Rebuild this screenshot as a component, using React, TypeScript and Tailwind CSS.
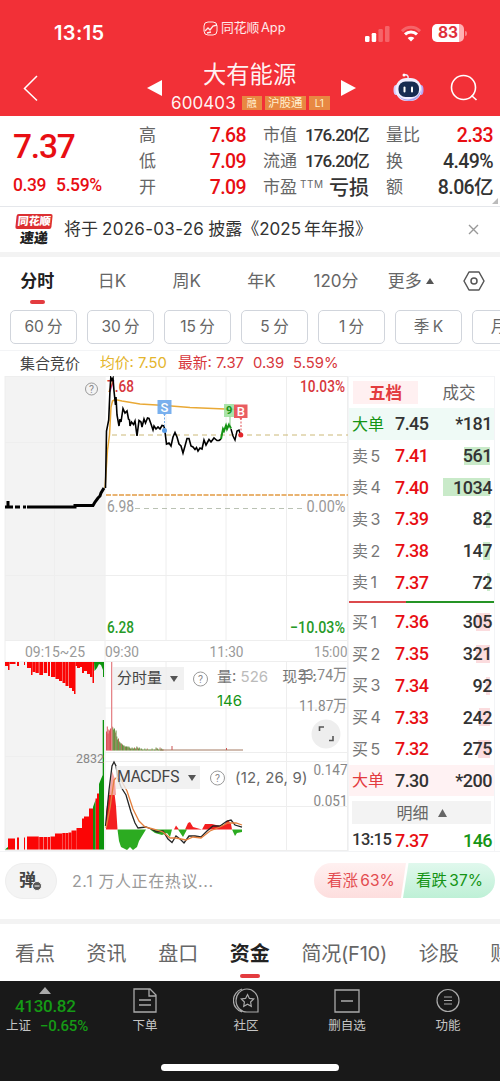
import React from 'react';
import clsx from 'clsx';

interface Level {
  label: string;
  price: string;
  volume: string;
  bar: number;
}

const asks: Level[] = [
  { label: '卖 5', price: '7.41', volume: '561', bar: 26 },
  { label: '卖 4', price: '7.40', volume: '1034', bar: 47 },
  { label: '卖 3', price: '7.39', volume: '82', bar: 4 },
  { label: '卖 2', price: '7.38', volume: '147', bar: 7 },
  { label: '卖 1', price: '7.37', volume: '72', bar: 3 },
];

const bids: Level[] = [
  { label: '买 1', price: '7.36', volume: '305', bar: 14 },
  { label: '买 2', price: '7.35', volume: '321', bar: 14 },
  { label: '买 3', price: '7.34', volume: '92', bar: 4 },
  { label: '买 4', price: '7.33', volume: '242', bar: 11 },
  { label: '买 5', price: '7.32', volume: '275', bar: 12 },
];

const periods = ['60 分', '30 分', '15 分', '5 分', '1 分', '季 K', '月 K'];
const bottomTabs = ['看点', '资讯', '盘口', '资金', '简况(F10)', '诊股', '财务'];

const num = "font-['Roboto','Noto_Sans_CJK_SC',sans-serif]";

function StatusBar() {
  return (
    <div className="flex h-[62px] items-start">
      <div className="w-[203px] pl-[54px] pt-[21px] text-[20px] leading-[25px] font-semibold tracking-[0.400px]">13:15</div>
      <div className="flex w-[162px] items-center gap-[3px] pt-[19px] text-[13px] leading-[18px] text-white/90">
        <svg width="15" height="15" viewBox="0 0 15 15" fill="none" stroke="currentColor">
          <rect x="1" y="1" width="13" height="13" rx="4" />
          <path d="M2 10l3-3 2 2 3-4 4-1M4 12l4-1" strokeWidth="1.3" />
        </svg>
        <span className="text-[12.800px] whitespace-nowrap [word-spacing:-2px]">同花顺 App</span>
      </div>
      <div className="flex items-center gap-[11px] pt-[24px]">
        <svg width="25" height="17" viewBox="0 0 25 17" fill="#fff">
          <rect x="0" y="11" width="4.5" height="6" rx="1.3" />
          <rect x="6.7" y="8" width="4.5" height="9" rx="1.3" />
          <rect x="13.4" y="4" width="4.5" height="13" rx="1.3" opacity=".25" />
          <rect x="20" y="1" width="4.5" height="16" rx="1.3" opacity=".25" />
        </svg>
        <svg width="20" height="17" viewBox="0 0 20 17" fill="none" stroke="#fff" strokeWidth="3">
          <path d="M1 6.2C6 1 14 1 19 6.2" opacity=".25" />
          <path d="M4 9.4c3.4-3.3 8.600-3.300 12 0" />
          <path d="M10 16.500l-3.400-3.500c2-1.800 4.800-1.800 6.800 0z" fill="#fff" stroke="none" />
        </svg>
        <div className="flex items-center gap-[1px]">
          <div className="flex h-[18px] w-[32px] items-center justify-center rounded-[5px] bg-linear-to-r from-white from-84% to-[#ffb0b3] to-84% text-[15.500px] font-bold text-[#e0303c]">83</div>
          <div className="h-[5px] w-[2px] rounded-r bg-white/40" />
        </div>
      </div>
    </div>
  );
}

function TitleBar() {
  return (
    <div className="flex h-[54px]">
      <div className="w-[140px] pl-[22px] pt-[12px]">
        <svg width="17" height="28" viewBox="0 0 17 28" fill="none" stroke="#fff" strokeWidth="1.5">
          <path d="M15 2L2.500 14.500L15 26.500" />
        </svg>
      </div>
      <div className="w-[31px] pl-[7px] pt-[18px]">
        <svg width="15" height="16" fill="#fff"><path d="M0 8L15 0V16z" /></svg>
      </div>
      <div className="w-[162px]">
        <div className="-mt-px pl-[32px] text-[23.300px] leading-[27px] text-white/95">大有能源</div>
        <div className="mt-px flex items-center gap-[3px] text-[10px] text-[#fff0d0]">
          <span className="mr-[3px] text-[17px] leading-[28px] tracking-[0.100px] text-white/95">600403</span>
          <span className="h-[14px] w-[20px] bg-[#e88842] text-center leading-[14px]">融</span>
          <span className="h-[14px] w-[41px] bg-[#e88842] text-center text-[11.500px] leading-[14px]">沪股通</span>
          <span className="h-[14px] w-[21px] bg-[#e88842] text-center leading-[14px]">L1</span>
        </div>
      </div>
      <div className="w-[60px] pl-[8px] pt-[18px]">
        <svg width="15" height="16" fill="#fff"><path d="M15 8L0 0V16z" /></svg>
      </div>
      <div className="w-[57px] pt-[10px]">
        <svg width="31" height="30" viewBox="0 0 31 30">
          <path d="M11 3q5-1 4 4" fill="none" stroke="#eee5ff" strokeWidth="1.500" />
          <circle cx="11" cy="3" r="1.500" fill="#fff" />
          <ellipse cx="3" cy="18" rx="2.500" ry="5" fill="#d6cafa" />
          <ellipse cx="28" cy="18" rx="2.500" ry="5" fill="#b8a4f2" />
          <rect x="2.500" y="6" width="26" height="23" rx="11" fill="#f1eeff" />
          <path d="M4 21c3 8 19 10 24-3-1 14-20 14-24 3z" fill="#a9a3ef" />
          <rect x="5.500" y="9.500" width="20.500" height="15.500" rx="7" fill="#172b51" />
          <rect x="10.500" y="14.500" width="2" height="6" rx="1" fill="#fff" />
          <rect x="18" y="14.500" width="2" height="6" rx="1" fill="#fff" />
        </svg>
      </div>
      <div className="pt-[12px]">
        <svg width="28" height="28" viewBox="0 0 28 28" fill="none" stroke="#fff" strokeWidth="1.600">
          <circle cx="13.500" cy="13.500" r="12" />
          <path d="M21.500 21.500l5 4.500" />
        </svg>
      </div>
    </div>
  );
}

function Quote() {
  return (
    <section className="relative flex h-[91px] border-b border-gray-200 pt-[7px] text-[17px] text-[#333]">
      <div className={clsx('w-[139px] pl-[13px] font-medium text-[#e80e13]', num)}>
        <div className="h-[49px] pt-[4px] text-[33.500px] leading-[40px] font-medium tracking-[-1.200px]">7.37</div>
        <div className="flex h-[26px] items-center gap-[10px] text-[17.500px] tracking-[-0.400px]"><span>0.39</span><span>5.59%</span></div>
      </div>
      <div className="w-[107px]">
        {[['高', '7.68'], ['低', '7.09'], ['开', '7.09']].map(([k, v]) => (
          <div key={k} className="flex h-[26px] items-center justify-between">
            <span className="text-[#666]">{k}</span>
            <span className={clsx('text-[19.500px] font-medium tracking-[-0.600px] text-[#e80e13]', num)}>{v}</span>
          </div>
        ))}
      </div>
      <div className="ml-[17px] w-[106px]">
        {[['市值', '176.20亿'], ['流通', '176.20亿']].map(([k, v]) => (
          <div key={k} className="flex h-[26px] items-center justify-between whitespace-nowrap">
            <span className="text-[#666]">{k}</span>
            <span className={clsx('text-[17px] font-medium tracking-[-0.850px]', num)}>{v}</span>
          </div>
        ))}
        <div className="flex h-[26px] items-center justify-between whitespace-nowrap">
          <span className="text-[#666]">市盈<sup className="ml-[3px] text-[10px] tracking-[0.500px]">TTM</sup></span>
          <span className="text-[20px] font-medium">亏损</span>
        </div>
      </div>
      <div className="ml-[17px] w-[107px]">
        {[['量比', '2.33'], ['换', '4.49%'], ['额', '8.06亿']].map(([k, v]) => (
          <div key={k} className="flex h-[26px] items-center justify-between">
            <span className="text-[#666]">{k}</span>
            <span className={clsx('text-[19.500px] font-medium tracking-[-0.600px]', num, k === '量比' && 'text-[#e80e13]')}>{v}</span>
          </div>
        ))}
      </div>
      <svg className="absolute right-[2px] bottom-[2px]" width="6" height="6" fill="#bbb"><path d="M6 0V6H0z" /></svg>
    </section>
  );
}

function News() {
  return (
    <section className="flex h-[45px] items-center pl-[16px]">
      <div className="flex w-[48px] flex-col items-start">
        <span className="h-[15px] w-[36px] -skew-x-6 rounded-[2px] bg-[#dc2f31] text-center text-[11px] leading-[15px] font-black text-white">同花顺</span>
        <span className="ml-[4px] h-[17px] -skew-x-6 text-[14px] leading-[17px] font-black text-[#222]">速递</span>
      </div>
      <div className="flex-1 text-[17px] whitespace-nowrap text-[#333]">将于<span className="mx-[4px] tracking-[0.300px]">2026-03-26</span>披露《2025<span className="ml-[3px]">年年报》</span></div>
      <svg className="mr-[21px]" width="11" height="11" stroke="#999" strokeWidth="1.400"><path d="M1 1l9 9M10 1l-9 9" /></svg>
    </section>
  );
}

function PeriodTabs() {
  return (
    <>
      <nav className="flex h-[53px] pt-[11px] text-[17px] text-[#666]">
        {['分时', '日K', '周K', '年K', '120分', '更多'].map((t, i) => (
          <div key={t} className={clsx('flex w-[74.700px] flex-col items-center', i === 0 && 'font-bold text-[#222]')}>
            <span className="flex items-center gap-[4px] leading-[26px]">
              {t}
              {t === '更多' && <svg width="8" height="6" fill="#555"><path d="M4 0L8 6H0z" /></svg>}
            </span>
            {i === 0 && <span className="mt-[6px] h-[4px] w-[15px] rounded-full bg-[#e33b3f]" />}
          </div>
        ))}
        <svg className="mt-[3px] ml-[15px]" width="22" height="20" viewBox="0 0 22 20" fill="none" stroke="#555" strokeWidth="1.500">
          <path d="M6 1h10l5 9-5 9H6L1 10z" strokeLinejoin="round" />
          <circle cx="11" cy="10" r="3" />
        </svg>
      </nav>
      <div className="flex h-[41px] gap-[10px] overflow-hidden border-b border-gray-100 pl-[10px] text-[15.500px] text-[#666] [word-spacing:-1px]">
        {periods.map((p) => (
          <div key={p} className="flex h-[34px] w-[67px] shrink-0 items-center justify-center rounded-[5px] border border-gray-300">{p}</div>
        ))}
      </div>
    </>
  );
}

const gray = '#f3f3f3';
const grid = '#eeeeee';

const priceLine =
  'M105.500 488L106.500 431L108.700 420L110 390L110.800 377.500L112 380L113 378L114 391L115.500 405L116 397L117 415L119 426L120 419L121 422L123 408.500L125 413L127 411L128.500 419L129.500 420L130 426L131.500 422L133.500 424.500L135 421L137 436L139 420.500L141 422L142 427L144 419L145.500 423L147.500 418L149 418.500L151 424L153 430L154 426L156 429L158 427L160 429L162 425.500L164 426L165 432L166.500 444L169 443L171 446L173 437L175 432.500L177 437L179 444L181 446L183 453L185 446L187 438.500L189 438.500L191 446L193 447L195 449.500L196.500 447.500L198 451L200 448L202 449L204 440L206 445L209 439.500L211 442L214 438L217 440.500L219 440.500L221 439';

// call auction volumes: [x, width, bar height]
const auctionTop = [
  [5, 3, 4], [8, 1.5, 8], [9.5, 6, 2], [17, 2, 4], [24, 1, 3], [27, 4, 6], [31, 1.5, 13], [32.5, 3, 10],
  [35.5, 3.3, 11], [39.3, 3.7, 13], [43.7, 3.5, 11], [48, 2, 14], [51, 4.5, 15], [55.5, 3.5, 17], [59, 3.2, 19],
  [62.5, 3, 21], [65.5, 3, 24], [69, 3, 26], [72, 2, 29], [74, 1.5, 32], [75.5, 1.5, 4],
  [77, 3, 6], [80, 2, 5], [82, 2, 11], [84, 3, 9], [87, 3, 12], [90, 2.5, 15], [92.5, 1.5, 21],
];
const auctionBottom = [
  [8, 7, 11], [17, 2, 12], [24, 1, 12], [27, 11.8, 13], [39.2, 4.2, 12.5], [43.8, 3.7, 12.5], [48, 2, 12.5],
  [50.5, 4.5, 13], [55, 7, 16], [62.3, 2.7, 16.5], [65.3, 3, 16.5], [68.5, 3, 17], [71.5, 5, 19],
  [76.5, 5.5, 21.5], [82, 2, 31], [84, 5, 33], [89, 4, 41], [95.5, 1.5, 51], [97, 2, 56],
];
const volumes = [
  19, 24, 17, 21, 20, 22, 19, 24, 23, 21, 22, 18, 20, 14, 11, 12, 9, 8, 7, 7, 6, 5, 5, 4, 4, 4, 4, 3, 4, 3, 2, 2, 3, 2,
  2, 3, 2, 2, 4, 3, 2, 3, 2, 1, 2, 1, 1, 1, 2, 1, 1, 2, 1, 1, 1, 1, 1, 2, 1, 1, 1, 1, 3, 2, 2, 1, 1, 3, 1, 2, 1, 1,
];

function Charts() {
  return (
    <div className="relative h-[476px] w-[348px] shrink-0">
      <svg width="348" height="476" viewBox="0 376 348 476" className={num} fontWeight="500" fontSize="16.500">
        <path d="M5 376.500H104.700V640.500H5zM5 661H104.700V850.500H5z" fill={gray} />
        <path d="M5 376.500H348M5 442.500H348M5 575.500H348M5 640.500H348M5 376V850M54.500 376V640M54.500 661V850M105 376V850M166 376V640M166 661V850M226 376V640M226 661V850M286.500 376V640M286.500 661V850M347.500 376V850M105 661.500H348M105 708H348M5 756.500H104M105 752.500H348M105 761.500H348M105 806.500H348M5 850.500H348" stroke={grid} fill="none" />
        <path d="M112 435H348" stroke="#ccb978" strokeDasharray="5 4" strokeWidth="1" />
        <path d="M106 495H348" stroke="#e29a43" strokeDasharray="5 1.500" strokeWidth="1.600" />
        <path d="M135 508.500H306" stroke="#bac2b4" strokeDasharray="5 4" />

        <g fill="#d7373c">
          <text x="107" y="391.500" textLength="27" lengthAdjust="spacingAndGlyphs">7.68</text>
          <text x="300" y="391.500" textLength="45" lengthAdjust="spacingAndGlyphs">10.03%</text>
        </g>
        <g fill="#279a27">
          <text x="107" y="632.500" textLength="27" lengthAdjust="spacingAndGlyphs">6.28</text>
          <text x="290" y="632.500" textLength="55" lengthAdjust="spacingAndGlyphs">−10.03%</text>
        </g>
        <g fill="#999" fontWeight="400">
          <text x="107" y="512" textLength="27" lengthAdjust="spacingAndGlyphs">6.98</text>
          <text x="306.500" y="512" textLength="39" lengthAdjust="spacingAndGlyphs">0.00%</text>
          <text x="25" y="657" fontSize="15.500" textLength="60" lengthAdjust="spacingAndGlyphs">09:15~25</text>
          <text x="105" y="656.500" fontSize="15.500" textLength="34" lengthAdjust="spacingAndGlyphs">09:30</text>
          <text x="209.500" y="656.500" fontSize="15.500" textLength="34" lengthAdjust="spacingAndGlyphs">11:30</text>
          <text x="314" y="656.500" fontSize="15.500" textLength="33.500" lengthAdjust="spacingAndGlyphs">15:00</text>
        </g>

        <path d="M5 507H13M8 501V508M15 507H20M23 507H26M27 507H75V505.500H93L95 502L98 498L100 496L101 493L104 488" fill="none" stroke="#000" strokeWidth="3" />
        <path d="M105 488L107.500 450L109.500 435L111 407L112.500 401L115 399.500L122 401L140 404L165 405.500L190 407.500L225 409L238 409.500" fill="none" stroke="#e9a936" strokeWidth="1.500" />
        <path d={priceLine} fill="none" stroke="#000" strokeWidth="1.600" />
        <path d="M231 429L233 436L235 440L237 431L239 430L240.500 435" fill="none" stroke="#000" strokeWidth="1.500" />
        <path d="M221 439L223 429L224 431L226 425.500L227 429L229 424.500L231 428.500" fill="none" stroke="#159415" strokeWidth="2" />
        <path d="M164.500 414V430" stroke="#75aeea" strokeDasharray="2 1.500" />
        <circle cx="164.500" cy="430.500" r="2.500" fill="#5b9ee8" />
        <path d="M157.500 400h14v14h-5.500l-1.500 2-1.500-2h-5.500z" fill="#6aa7ec" opacity=".9" />
        <path d="M230 416V425" stroke="#83c883" />
        <path d="M224 404h10v13H224z" fill="#9adf9a" opacity=".85" />
        <text x="226" y="414" fontSize="11" fontWeight="700" fill="#169316">9</text>
        <path d="M241 418V433" stroke="#e05357" strokeDasharray="2 1.500" />
        <circle cx="240.800" cy="435" r="2.500" fill="#e3262b" />
        <path d="M234 404.500h13.500v13.500h-5.200l-1.500 2-1.500-2H234z" fill="#e85459" opacity=".95" />
        <text x="164.500" y="412" fontSize="13" fill="#fff" textAnchor="middle">S</text>
        <text x="240.800" y="416" fontSize="13" fill="#fff" textAnchor="middle">B</text>

        {/* call auction */}
        <g fill="#fb0505">
          {auctionTop.map(([x, w, h]) => <rect key={x} x={x} y="662" width={w} height={h} />)}
          {auctionBottom.map(([x, w, h]) => <rect key={x} x={x} y={849.5 - h} width={w} height={h} />)}
        </g>
        <path d="M94 662H104V677H103V670L101 665L99 664L97 668L94.500 671zM5 849.500L8 847V849.500zM93 849.500V807L95.500 800V849.500zM99 849.500V784L101 779L102.700 775V720H104V849.500z" fill="#0d940d" />

        {/* volume */}
        {volumes.map((v, i) => (
          <rect key={i} x={106 + i * 0.8} y={750.5 - v} width="0.900" height={v} fill={i < 8 ? '#db4149' : i % 4 === 3 ? '#a8624a' : '#55882e'} />
        ))}
        <rect x="111" y="662" width="1.300" height="88" fill="#e58589" />
        <path d="M160 750H243" stroke="#a47b62" />
        <path d="M172 750V746M226.500 750V748" stroke="#cb5252" />

        {/* macd */}
        <path d="M106 829.500V812L108 800L110 789L112 785L114 789L116 806L117.500 829.500zM174 829.500L176 825.500L179 829.500zM185 829.500L188 823L190 822L193 827L202 829.500L205 824L212 824L220 826L224 825L228 820L231 824L232 829.500z" fill="#f41f20" />
        <path d="M109 795L111 780L112 771L115 779L116 795z" fill="#f5a5a5" />
        <path d="M117.500 829.500H146L142 836L139 841L137 847L133 850L130 847L127 850L121 847L119 841zM150 829.500H172L170 837L167 833L162 835L155 833zM178 829.500H187L183 837zM232 829.500H242V832L237 833L235 836z" fill="#2cab21" />
        <path d="M105.500 826L109 790L112 766L114 762L116 766L118 779L121 787L126 795L131 812L135 823L138 828L146 827L151 829L157 832L163 831L168 839L172 842.500L176 836L180 839L184 843L189 836L195 836L201 837L207 831L213 826L220 826L227 821L231 820L235 825L242 827" fill="none" stroke="#252525" strokeWidth="1.300" />
        <path d="M106 828L110 808L114 780L117 777L121 780L127 791L133 809L139 821L145 827L153 829L163 832L170 838L176 838L186 840L193 837L201 838L210 831L220 827L228 823L236 823L242 825" fill="none" stroke="#e4803e" strokeWidth="1.300" />

        <g fill="#888" fontWeight="400" fontSize="15.500">
          <text x="76" y="763" fontSize="13" textLength="28" lengthAdjust="spacingAndGlyphs">2832</text>
          <text x="298" y="679.500" textLength="49" lengthAdjust="spacingAndGlyphs">23.74万</text>
          <text x="299" y="711" textLength="48" lengthAdjust="spacingAndGlyphs">11.87万</text>
          <text x="313.500" y="775" textLength="34" lengthAdjust="spacingAndGlyphs">0.147</text>
          <text x="313.500" y="806" textLength="34" lengthAdjust="spacingAndGlyphs">0.051</text>
        </g>
        <circle cx="326" cy="734" r="14.500" fill="#eee" />
        <path d="M319.500 731V727H324M329 740.500H333V736" fill="none" stroke="#555" strokeWidth="1.600" />
        <g fill="none" stroke="#999">
          <circle cx="91.500" cy="389" r="6" />
          <circle cx="200.500" cy="679" r="7" />
          <circle cx="217.500" cy="778" r="7" />
        </g>
        <g fill="#888" fontWeight="400" fontSize="10.500" textAnchor="middle">
          <text x="91.500" y="392.500">?</text>
          <text x="200.500" y="683">?</text>
          <text x="217.500" y="782">?</text>
        </g>
      </svg>

      {/* indicator pickers over the plots */}
      <div className="absolute top-[291px] left-[113px] flex h-[23px] w-[71px] items-center gap-[8px] bg-[#eee]/80 pl-[4px] text-[15px] text-[#444]">
        分时量
        <svg width="8" height="6" fill="#555"><path d="M0 0H8L4 6z" /></svg>
      </div>
      <div className="absolute top-[390px] left-[116px] flex h-[23px] w-[84px] items-center gap-[8px] bg-[#eee]/80 pl-[1px] text-[15.300px] tracking-[-0.400px] text-[#444]">
        MACDFS
        <svg width="8" height="6" fill="#555"><path d="M0 0H8L4 6z" /></svg>
      </div>
      <div className="absolute top-[289px] left-[217px] text-[15px] leading-[24px] whitespace-nowrap text-[#777]">
        量: <span className="text-[#bbb]">526</span><span className="ml-[14px]">现手:</span>
      </div>
      <div className="absolute top-[313px] left-[217px] text-[15px] leading-[23px] text-[#159415]">146</div>
      <div className="absolute top-[390px] left-[235px] text-[15px] leading-[23px] tracking-[0.200px] whitespace-nowrap text-[#666]">(12, 26, 9)</div>
    </div>
  );
}

function LevelRow({ level, side }: { level: Level; side: 'ask' | 'bid' }) {
  return (
    <div className="relative flex h-[31.700px] items-center pl-[3px]">
      <span className="w-[43px] text-[16px] text-[#777] [word-spacing:-2px]">{level.label}</span>
      <span className={clsx('text-[18px] font-medium tracking-[-0.600px] text-[#e80e13]', num)}>{level.price}</span>
      <div
        className={clsx('absolute top-[7px] right-[4px] h-[18px]', side === 'ask' ? 'bg-[#c9eac9]' : 'bg-[#fbdcde]')}
        style={{ width: level.bar }}
      />
      <span className={clsx('relative mr-[2px] flex-1 text-right text-[18px] font-medium tracking-[-0.500px] text-[#333]', num)}>{level.volume}</span>
    </div>
  );
}

function BigOrder({ side, price, volume }: { side: 'ask' | 'bid'; price: string; volume: string }) {
  return (
    <div className={clsx('flex h-[31.700px] items-center pl-[3px]', side === 'ask' ? 'bg-[#effaf6]' : 'bg-[#fff2f3]')}>
      <span className={clsx('w-[43px] text-[16px]', side === 'ask' ? 'text-[#159415]' : 'text-[#e33b3f]')}>大单</span>
      <span className={clsx('text-[18px] font-medium tracking-[-0.600px] text-[#333]', num)}>{price}</span>
      <span className={clsx('mr-[2px] flex-1 text-right text-[18px] font-medium tracking-[-0.500px] text-[#333]', num)}>*{volume}</span>
    </div>
  );
}

function OrderBook() {
  return (
    <div className="w-[147px] border-x border-t border-gray-100">
      <div className="flex h-[31px] pt-[4px] pl-[4px] text-center text-[16.500px] leading-[24px]">
        <div className="h-[23px] w-[65px] bg-[#fff0f1] font-bold text-[#e33b3f]">五档</div>
        <div className="flex-1 pl-[6px] text-[#666]">成交</div>
      </div>
      <BigOrder side="ask" price="7.45" volume="181" />
      {asks.map((l) => <LevelRow key={l.label} level={l} side="ask" />)}
      <div className="my-[3px] flex h-[2px]">
        <div className="w-[57px] bg-[#dc4a4c]" />
        <div className="flex-1 bg-[#259425]" />
      </div>
      {bids.map((l) => <LevelRow key={l.label} level={l} side="bid" />)}
      <BigOrder side="bid" price="7.30" volume="200" />
      <div className="mx-[3px] mt-[5px] flex h-[23px] items-center justify-center gap-[9px] bg-[#f3f3f3] text-[16px] text-[#666]">
        明细
        <svg width="9" height="8" fill="#666"><path d="M4.500 0L9 8H0z" /></svg>
      </div>
      <div className={clsx('flex h-[32px] items-center pl-[3px] text-[18px] font-medium tracking-[-0.600px]', num)}>
        <span className="w-[43px] text-[16.500px] tracking-[-0.500px] text-[#333]">13:15</span>
        <span className="text-[#e80e13]">7.37</span>
        <span className="mr-[2px] flex-1 text-right text-[#159415]">146</span>
      </div>
    </div>
  );
}

function Discussion() {
  return (
    <section className="flex h-[67px] items-start pt-[11px] pl-[5px]">
      <div className="relative flex h-[36px] w-[52px] items-center rounded-full border border-[#eee] bg-[#f4f4f4] pl-[13px] text-[17px] font-bold text-[#444]">
        弹
        <svg className="absolute top-[17px] left-[26px]" width="10" height="10">
          <circle cx="5" cy="5" r="4.500" fill="#555" stroke="#f4f4f4" />
          <path d="M2.500 5h5" stroke="#fff" />
        </svg>
      </div>
      <div className="ml-[15px] w-[242px] text-[16px] leading-[36px] tracking-[0.600px] text-[#999]">2.1 万人正在热议...</div>
      <div className="flex h-[35px] items-center text-[15.500px] whitespace-nowrap [word-spacing:-2px]">
        <div className="h-[35px] w-[92px] rounded-l-full bg-linear-to-b from-[#fff0f0] to-[#fddede] pl-[13px] leading-[36px] text-[#e34c50] [clip-path:polygon(0_0,100%_0,94.500%_100%,0_100%)]">看涨 63%</div>
        <div className="-ml-[3px] h-[35px] w-[92px] rounded-r-full bg-linear-to-b from-[#e0f8ed] to-[#bef0d6] pl-[13px] leading-[36px] text-[#159415] [clip-path:polygon(6%_0,100%_0,100%_100%,0_100%)]">看跌 37%</div>
      </div>
    </section>
  );
}

function Footer() {
  const item = 'flex w-[101px] flex-col items-center gap-[4px] pt-[6px] text-[12.500px] leading-[18px] text-[#c5c5c5]';
  return (
    <footer className="h-[100px] bg-[#191919]">
      <div className="flex h-[82px] pt-px">
        <div className="flex w-[94.500px] flex-col pt-[5px] pl-[6px]">
          <svg className="ml-[33px]" width="12" height="7" fill="#aaa"><path d="M6 0L12 7H0z" /></svg>
          <span className={clsx('ml-[9px] text-[17px] leading-[24px] font-medium tracking-[-0.300px] text-[#159a15]', num)}>4130.82</span>
          <span className="flex items-center gap-[9px] text-[12.500px] leading-[16px] text-[#c5c5c5]">
            上证<span className={clsx('text-[15px] font-medium tracking-[-0.200px] whitespace-nowrap text-[#159a15]', num)}>−0.65%</span>
          </span>
        </div>
        <div className={item}>
          <svg width="24" height="25" viewBox="0 0 24 25" fill="none" stroke="#aaa" strokeWidth="1.300">
            <path d="M1 1h16l6 6v17H1zM16 1v7h7M6 12h12M6 17h12" />
          </svg>
          下单
        </div>
        <div className={item}>
          <svg width="26" height="25" viewBox="0 0 26 25" fill="none" stroke="#aaa" strokeWidth="1.200">
            <path d="M25 24H14.500A11 11.500 0 1 1 25 12.500zM9 1A12 12 0 0 0 9 24" />
            <path d="M14.500 6.500l1.900 3.900 4.300.6-3.100 3 .7 4.300-3.800-2-3.800 2 .7-4.300-3.100-3 4.300-.6z" />
          </svg>
          社区
        </div>
        <div className={item}>
          <svg width="26" height="25" viewBox="0 0 26 25" fill="none" stroke="#aaa" strokeWidth="1.300">
            <path d="M1 2h24v22H1zM7 13h12" />
          </svg>
          删自选
        </div>
        <div className={item}>
          <svg width="24" height="25" viewBox="0 0 24 25" fill="none" stroke="#aaa" strokeWidth="1.200">
            <circle cx="12" cy="12.500" r="11" />
            <path d="M8 9h8M8 12.500h8M8 16h8" />
          </svg>
          功能
        </div>
      </div>
      <div className="mx-auto mt-[1px] h-[7px] w-[178px] rounded-full bg-white" />
    </footer>
  );
}

export default function App() {
  return (
    <main className="h-[1081px] w-[500px] overflow-hidden bg-white font-['Inter','Noto_Sans_CJK_SC',sans-serif]">
      <header className="h-[116px] bg-[#f23037] text-white">
        <StatusBar />
        <TitleBar />
      </header>
      <Quote />
      <News />
      <div className="h-[5px] bg-[#f3f3f3]" />
      <PeriodTabs />
      <div className="flex h-[25px] items-center pl-[20px] text-[15px] leading-[25px] whitespace-nowrap text-[#d7373c]">
        <span className="w-[80px] text-[#444]">集合竞价</span>
        <span className="w-[78px] text-[14.800px] text-[#e4b52d]">均价: 7.50</span>
        <span className="text-[14.800px]">最新: 7.37</span>
        <span className="ml-[9px] text-[14.800px]">0.39</span>
        <span className="ml-[9px] text-[14.800px]">5.59%</span>
      </div>
      <div className="flex h-[476px] border-b border-gray-100">
        <Charts />
        <OrderBook />
      </div>
      <Discussion />
      <div className="h-[5px] bg-[#f3f3f3]" />
      <nav className="flex h-[57px] gap-[31.600px] overflow-hidden pt-[14px] pl-[15px] text-[20px] leading-[32px] whitespace-nowrap text-[#666]">
        {bottomTabs.map((t) => (
          <div key={t} className={clsx('flex shrink-0 flex-col items-center', t === '资金' && 'font-bold text-[#222]', t === '简况(F10)' && 'tracking-[-0.200px]')}>
            {t}
            {t === '资金' && <span className="mt-[4px] h-[4px] w-[20px] rounded-full bg-[#e33b3f]" />}
          </div>
        ))}
      </nav>
      <Footer />
    </main>
  );
}
